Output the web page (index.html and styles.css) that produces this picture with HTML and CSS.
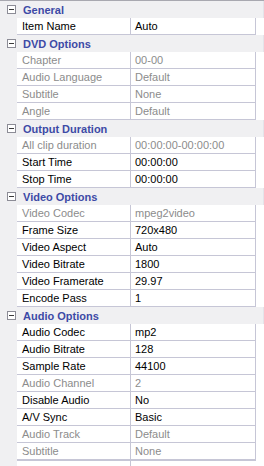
FILE: index.html
```html
<!DOCTYPE html>
<html>
<head>
<meta charset="utf-8">
<link rel="stylesheet" href="styles.css">
</head>
<body>
<div class="grid">
  <div class="cat"><span class="box"></span><span class="ct">General</span></div>
  <div class="row"><span class="gut"></span><span class="nm">Item Name</span><span class="vl">Auto</span></div>

  <div class="cat"><span class="box"></span><span class="ct">DVD Options</span></div>
  <div class="row dis"><span class="gut"></span><span class="nm">Chapter</span><span class="vl">00-00</span></div>
  <div class="row dis"><span class="gut"></span><span class="nm">Audio Language</span><span class="vl">Default</span></div>
  <div class="row dis"><span class="gut"></span><span class="nm">Subtitle</span><span class="vl">None</span></div>
  <div class="row dis"><span class="gut"></span><span class="nm">Angle</span><span class="vl">Default</span></div>

  <div class="cat"><span class="box"></span><span class="ct">Output Duration</span></div>
  <div class="row dis"><span class="gut"></span><span class="nm">All clip duration</span><span class="vl">00:00:00-00:00:00</span></div>
  <div class="row"><span class="gut"></span><span class="nm">Start Time</span><span class="vl">00:00:00</span></div>
  <div class="row"><span class="gut"></span><span class="nm">Stop Time</span><span class="vl">00:00:00</span></div>

  <div class="cat"><span class="box"></span><span class="ct">Video Options</span></div>
  <div class="row dis"><span class="gut"></span><span class="nm">Video Codec</span><span class="vl">mpeg2video</span></div>
  <div class="row"><span class="gut"></span><span class="nm">Frame Size</span><span class="vl">720x480</span></div>
  <div class="row"><span class="gut"></span><span class="nm">Video Aspect</span><span class="vl">Auto</span></div>
  <div class="row"><span class="gut"></span><span class="nm">Video Bitrate</span><span class="vl">1800</span></div>
  <div class="row"><span class="gut"></span><span class="nm">Video Framerate</span><span class="vl">29.97</span></div>
  <div class="row"><span class="gut"></span><span class="nm">Encode Pass</span><span class="vl">1</span></div>

  <div class="cat"><span class="box"></span><span class="ct">Audio Options</span></div>
  <div class="row"><span class="gut"></span><span class="nm">Audio Codec</span><span class="vl">mp2</span></div>
  <div class="row"><span class="gut"></span><span class="nm">Audio Bitrate</span><span class="vl">128</span></div>
  <div class="row"><span class="gut"></span><span class="nm">Sample Rate</span><span class="vl">44100</span></div>
  <div class="row dis"><span class="gut"></span><span class="nm">Audio Channel</span><span class="vl">2</span></div>
  <div class="row"><span class="gut"></span><span class="nm">Disable Audio</span><span class="vl">No</span></div>
  <div class="row"><span class="gut"></span><span class="nm">A/V Sync</span><span class="vl">Basic</span></div>
  <div class="row dis"><span class="gut"></span><span class="nm">Audio Track</span><span class="vl">Default</span></div>
  <div class="row dis"><span class="gut"></span><span class="nm">Subtitle</span><span class="vl">None</span></div>

  <div class="rest"><span class="gut"></span><span class="nm"></span><span class="vl"></span></div>
</div>
</body>
</html>
```

FILE: styles.css
```css
html, body {
  margin: 0;
  padding: 0;
  background: #ffffff;
}
.grid {
  width: 264px;
  height: 466px;
  box-sizing: border-box;
  border-top: 1px solid #a8a8b0;
  display: flex;
  flex-direction: column;
  font-family: "Liberation Sans", Arial, sans-serif;
  font-size: 11px;
  color: #000;
  background: #fff;
  overflow: hidden;
}
.cat {
  height: 17px;
  flex: none;
  display: flex;
  align-items: center;
  background: #f0f0f2;
  box-sizing: border-box;
  border-right: 1px solid #e4e4ea;
  width: 264px;
}
.box {
  width: 7px;
  height: 7px;
  margin-left: 7px;
  margin-right: 7px;
  border: 1px solid #8c8c96;
  background: #fff;
  position: relative;
  flex: none;
}
.box::after {
  content: "";
  position: absolute;
  left: 1px;
  right: 1px;
  top: 3px;
  height: 1px;
  background: #3a3a3a;
}
.ct {
  font-weight: bold;
  color: #3d4aa6;
  padding-top: 1px;
}
.row, .rest {
  height: 17px;
  flex: none;
  display: flex;
}
.rest {
  flex: 1;
}
.gut {
  width: 17px;
  flex: none;
  background: #f0f0f2;
}
.nm {
  width: 114px;
  flex: none;
  box-sizing: border-box;
  padding-left: 5px;
  border-bottom: 1px solid #c6c6d6;
  border-right: 1px solid #c6c6d6;
  line-height: 16px;
  white-space: nowrap;
  overflow: hidden;
  background: #fff;
}
.vl {
  width: 125px;
  flex: none;
  box-sizing: border-box;
  padding-left: 4px;
  border-bottom: 1px solid #c6c6d6;
  border-right: 1px solid #c6c6d6;
  line-height: 16px;
  white-space: nowrap;
  overflow: hidden;
  background: #fff;
}
.rest .nm, .rest .vl {
  border-bottom: none;
}
.rest .nm {
  border-top: 1px solid #c6c6d6;
  border-right: 1px solid #c6c6d6;
}
.rest .vl {
  border-top: 1px solid #c6c6d6;
  border-right: none;
}
.dis .nm, .dis .vl {
  color: #8c8c8c;
}
```
